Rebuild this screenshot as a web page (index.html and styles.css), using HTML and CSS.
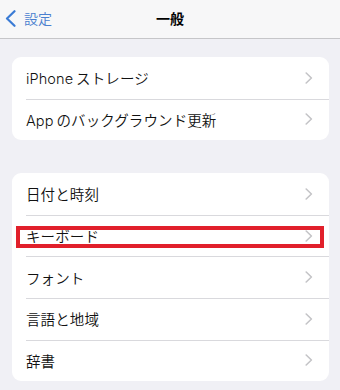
FILE: index.html
```html
<!DOCTYPE html>
<html lang="ja">
<head>
<meta charset="utf-8">
<link rel="stylesheet" href="styles.css">
</head>
<body>
<header class="nav">
  <div class="back">
    <svg class="back-icon" width="11" height="17" viewBox="0 0 11 17"><path d="M9.5 1.2 L2 8.5 L9.5 15.8" fill="none" stroke="#3a7bd5" stroke-width="2.2" stroke-linecap="round" stroke-linejoin="round"/></svg>
    <span class="back-label">設定</span>
  </div>
  <div class="title">一般</div>
</header>
<main class="content">
  <section class="card card-first">
    <div class="row"><span class="label">iPhone<span class="thin"> </span>ストレージ</span><svg class="chev" width="8" height="12" viewBox="0 0 8 12"><path d="M1.2 1 L6.4 6 L1.2 11" fill="none" stroke="#c4c4c7" stroke-width="1.6" stroke-linecap="round" stroke-linejoin="round"/></svg></div>
    <div class="row"><span class="label">App<span class="thin"> </span>のバックグラウンド更新</span><svg class="chev" width="8" height="12" viewBox="0 0 8 12"><path d="M1.2 1 L6.4 6 L1.2 11" fill="none" stroke="#c4c4c7" stroke-width="1.6" stroke-linecap="round" stroke-linejoin="round"/></svg></div>
  </section>
  <section class="card card-second">
    <div class="row"><span class="label">日付と時刻</span><svg class="chev" width="8" height="12" viewBox="0 0 8 12"><path d="M1.2 1 L6.4 6 L1.2 11" fill="none" stroke="#c4c4c7" stroke-width="1.6" stroke-linecap="round" stroke-linejoin="round"/></svg></div>
    <div class="row row-highlight"><span class="label">キーボード</span><svg class="chev" width="8" height="12" viewBox="0 0 8 12"><path d="M1.2 1 L6.4 6 L1.2 11" fill="none" stroke="#c4c4c7" stroke-width="1.6" stroke-linecap="round" stroke-linejoin="round"/></svg></div>
    <div class="row"><span class="label">フォント</span><svg class="chev" width="8" height="12" viewBox="0 0 8 12"><path d="M1.2 1 L6.4 6 L1.2 11" fill="none" stroke="#c4c4c7" stroke-width="1.6" stroke-linecap="round" stroke-linejoin="round"/></svg></div>
    <div class="row"><span class="label">言語と地域</span><svg class="chev" width="8" height="12" viewBox="0 0 8 12"><path d="M1.2 1 L6.4 6 L1.2 11" fill="none" stroke="#c4c4c7" stroke-width="1.6" stroke-linecap="round" stroke-linejoin="round"/></svg></div>
    <div class="row"><span class="label">辞書</span><svg class="chev" width="8" height="12" viewBox="0 0 8 12"><path d="M1.2 1 L6.4 6 L1.2 11" fill="none" stroke="#c4c4c7" stroke-width="1.6" stroke-linecap="round" stroke-linejoin="round"/></svg></div>
  </section>
</main>
</body>
</html>
```
FILE: styles.css
```css
html, body {
  margin: 0;
  padding: 0;
}
body {
  width: 340px;
  height: 390px;
  overflow: hidden;
  background: #f0f0f5;
  font-family: "Inter", "Noto Sans CJK JP", sans-serif;
  color: #000;
}
.nav {
  position: relative;
  height: 38px;
  background: #f7f7f8;
  border-bottom: 1px solid #c6c6c9;
  display: flex;
  align-items: center;
  justify-content: center;
}
.back {
  position: absolute;
  left: 5px;
  top: 0;
  height: 38px;
  display: flex;
  align-items: center;
  gap: 8px;
}
.back-icon {
  display: block;
  margin-top: -2px;
}
.back-label {
  font-family: "Noto Sans CJK JP", sans-serif;
  font-size: 14px;
  font-weight: 350;
  color: #4a80cf;
  margin-top: -2px;
}
.title {
  font-family: "Noto Sans CJK JP", sans-serif;
  font-size: 14px;
  font-weight: 700;
  margin-top: -2px;
}
.content {
  padding: 18px 11px 0 12px;
  display: flex;
  flex-direction: column;
  gap: 33px;
}
.card {
  background: #fff;
  border-radius: 9px;
}
.row {
  position: relative;
  height: 41.6px;
  box-sizing: border-box;
  display: flex;
  align-items: center;
  justify-content: space-between;
  padding: 0 16px 0 14px;
}
.row + .row::before {
  content: "";
  position: absolute;
  left: 14px;
  right: 0;
  top: 0;
  height: 1px;
  background: #d9d9dd;
}
.label {
  font-size: 14.5px;
  font-weight: 350;
  letter-spacing: 0.1px;
  color: #111;
}
.thin {
  font-size: 10px;
}
.chev {
  display: block;
}
.row-highlight::after {
  content: "";
  position: absolute;
  left: 4px;
  right: 5px;
  top: 11px;
  bottom: 8px;
  border: 4px solid #e1202b;
}
```
